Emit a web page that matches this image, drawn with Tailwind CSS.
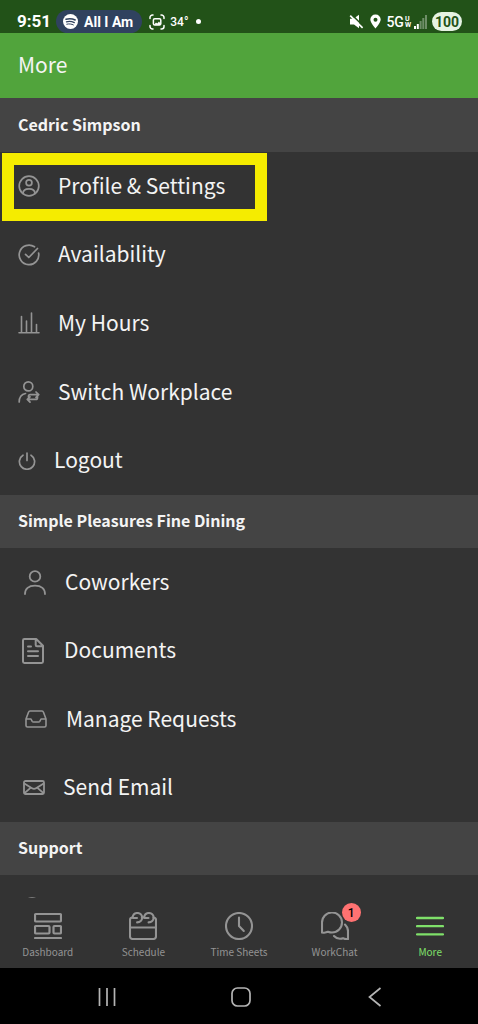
<!DOCTYPE html>
<html lang="en">
<head>
<meta charset="utf-8">
<meta name="viewport" content="width=device-width, initial-scale=1">
<title>More</title>
<script src="https://cdn.jsdelivr.net/npm/@tailwindcss/browser@4"></script>
</head>
<body class="flex h-screen flex-col overflow-hidden bg-[#333333] font-['Noto_Sans_CJK_SC','Noto_Sans',sans-serif] text-[#f4f4f4]">

<!-- System status bar -->
<div class="flex h-[33px] shrink-0 items-end justify-between bg-[#225218] pr-4 pl-[17px] font-[Roboto,sans-serif] text-white">
  <div class="flex h-[23px] items-center">
    <span class="text-[17px] leading-none font-bold">9:51</span>
    <div class="ml-[5px] flex h-[23px] items-center gap-1.5 rounded-full bg-[#30425f] pr-[9px] pl-[7px]">
      <svg class="size-[15px]" viewBox="0 0 15 15" aria-hidden="true"><circle cx="7.500" cy="7.500" r="7.500" fill="#fff"/><g fill="none" stroke="#30425f" stroke-linecap="round"><path d="M3 5.200C6 4.300 9.500 4.600 12.200 6" stroke-width="1.500"/><path d="M3.400 7.800C6 7.100 9 7.400 11.300 8.600" stroke-width="1.200"/><path d="M3.800 10.200C6 9.600 8.500 9.900 10.400 10.900" stroke-width="1"/></g></svg>
      <span class="text-[14px] leading-none font-bold">All I Am</span>
    </div>
    <svg class="ml-[7px] size-4" viewBox="0 0 16 16" fill="none" stroke="#fff" stroke-width="1.500" stroke-linecap="round" aria-hidden="true"><path d="M1 4.500V3.500A2.500 2.500 0 0 1 3.500 1H4M12 1h.5A2.500 2.500 0 0 1 15 3.500v1M15 11.500v1A2.500 2.500 0 0 1 12.500 15H12M4 15h-.5A2.500 2.500 0 0 1 1 12.500v-1"/><rect x="4.400" y="4.700" width="7.400" height="6.400" rx="1.400"/><path d="M5 10.800 7 8.600l1.200 1 1.800-2 1.800 2.400v1z" fill="#fff" stroke="none"/></svg>
    <span class="ml-[5px] text-[12px] leading-none font-medium">34°</span>
    <span class="ml-[8px] size-[5px] rounded-full bg-white"></span>
  </div>
  <div class="flex h-[23px] items-center">
    <svg class="h-[15px] w-[15px]" viewBox="0 0 15 15" aria-hidden="true"><path d="M1 4.800h3.500L10 .8v13.400L5 10.500H1z" fill="#fff"/><path d="M2.600.6 15 12.800" stroke="#225218" stroke-width="1.600"/><path d="M1.200 1.600 13.600 13.800" stroke="#fff" stroke-width="1.700"/></svg>
    <svg class="ml-[6px] h-[15px] w-[11px]" viewBox="0 0 11 15" aria-hidden="true"><path fill="#fff" fill-rule="evenodd" d="M5.500.5A5 5 0 0 0 .3 5.600C.3 9 5.500 14.500 5.500 14.500S10.700 9 10.700 5.600A5 5 0 0 0 5.500.5Zm0 3.200a2 2 0 1 1 0 4 2 2 0 0 1 0-4Z"/></svg>
    <span class="ml-[5px] text-[14px] leading-none font-medium">5G</span>
    <span class="ml-px flex flex-col text-[7px] leading-[6px] font-bold"><span>U</span><span>W</span></span>
    <svg class="ml-[3px] h-[14px] w-[13px]" viewBox="0 0 13 14" fill="#fff" aria-hidden="true"><path d="M0 11h2v3H0zM2.800 9h2v5h-2z"/><path d="M5.600 6h2v8h-2zM8.300 3h2v11h-2zM11 0h2v14h-2z" opacity=".35"/></svg>
    <span class="ml-[5px] flex h-[19px] w-[30px] items-center justify-center rounded-full bg-[#e6f3e3] text-[14px] leading-none font-bold text-[#225218]">100</span>
  </div>
</div>

<header class="flex h-[65px] shrink-0 items-center bg-[#51a43c] px-[18px] pb-1">
  <h1 class="text-[21px] leading-8">More</h1>
</header>

<main class="min-h-0 flex-1 overflow-hidden">
  <section>
    <h2 class="flex h-[54px] items-center bg-[#444444] px-[18px] pb-0.5 text-[16px] leading-6 font-bold">Cedric Simpson</h2>
    <ul class="relative grid h-[343px] grid-rows-5 text-[21px] leading-8">
      <li class="grid"><a href="#profile" class="flex items-center gap-[18px] pl-[18px]">
        <svg class="size-[22px]" viewBox="0 0 22 22" fill="none" stroke="#949494" stroke-width="1.700" aria-hidden="true"><circle cx="11" cy="11" r="9.800"/><circle cx="11" cy="7.700" r="2.900"/><path d="M5 18.500c0-3 2.200-4.700 6-4.700s6 1.700 6 4.700" stroke-linecap="round"/></svg>
        <span class="pb-[3px]">Profile &amp; Settings</span></a></li>
      <li class="grid"><a href="#availability" class="flex items-center gap-[18px] pl-[18px]">
        <svg class="size-[22px]" viewBox="0 0 22 22" fill="none" stroke="#949494" stroke-width="1.700" stroke-linecap="round" stroke-linejoin="round" aria-hidden="true"><path d="M16.500 2.800A9.800 9.800 0 1 0 20.600 9"/><path d="m7.500 10.300 3.300 3.200L19.500 4.500"/></svg>
        <span class="pb-[3px]">Availability</span></a></li>
      <li class="grid"><a href="#hours" class="flex items-center gap-[18px] pl-[18px]">
        <svg class="size-[22px]" viewBox="0 0 22 22" fill="none" stroke="#949494" stroke-width="1.600" stroke-linecap="round" aria-hidden="true"><path d="M1 20.700h20M3.500 20V4.500M8.500 20V9M13.500 20V1M18.500 20v-7.500"/></svg>
        <span class="pb-[3px]">My Hours</span></a></li>
      <li class="grid"><a href="#workplace" class="flex items-center gap-[18px] pl-[18px]">
        <svg class="size-[22px]" viewBox="0 0 22 22" fill="none" stroke="#949494" stroke-width="1.700" stroke-linecap="round" stroke-linejoin="round" aria-hidden="true"><circle cx="10.300" cy="5.400" r="4.500"/><path d="M1.200 21c0-4.300 2.300-7.700 6.300-8.500M10.500 16.200v-.8c0-1 .6-1.700 1.700-1.700h8.300M18 11l2.700 2.700L18 16.400M19.500 15.500v1.200c0 1-.6 1.700-1.700 1.700H9.500M12 15.800l-2.700 2.600L12 21.200"/></svg>
        <span class="pb-[3px]">Switch Workplace</span></a></li>
      <li class="grid"><a href="#logout" class="flex items-center gap-[18px] pl-[18px]">
        <svg class="size-[18px]" viewBox="0 0 18 18" fill="none" stroke="#949494" stroke-width="1.700" stroke-linecap="round" aria-hidden="true"><path d="M9 1v7.500M5 3.200a7.600 7.600 0 1 0 8 0"/></svg>
        <span class="pb-[3px]">Logout</span></a></li>
      <li class="pointer-events-none absolute top-px left-0.5 h-[68px] w-[265px] border-12 border-[#f5ec00]" aria-hidden="true"></li>
    </ul>
  </section>

  <section>
    <h2 class="flex h-[53px] items-center bg-[#444444] px-[18px] pb-[3px] text-[16px] leading-6 font-bold">Simple Pleasures Fine Dining</h2>
    <ul class="grid h-[274px] grid-rows-4 text-[21px] leading-8">
      <li class="grid"><a href="#coworkers" class="flex items-center gap-[19px] pl-6">
        <svg class="h-[25px] w-[22px]" viewBox="0 0 22 25" fill="none" stroke="#949494" stroke-width="1.800" stroke-linecap="round" aria-hidden="true"><circle cx="11" cy="6.400" r="5.300"/><path d="M1 24c0-5.200 3.500-8.300 10-8.300S21 18.800 21 24"/></svg>
        <span class="pb-[3px]">Coworkers</span></a></li>
      <li class="grid"><a href="#documents" class="flex items-center gap-5 pl-[22px]">
        <svg class="h-[26px] w-[22px]" viewBox="0 0 22 26" fill="none" stroke="#949494" stroke-width="2" stroke-linecap="round" stroke-linejoin="round" aria-hidden="true"><path d="M2.400 1h11.800L21 7.800v15.800c0 .9-.5 1.400-1.400 1.400H2.400C1.500 25 1 24.500 1 23.600V2.400C1 1.500 1.500 1 2.400 1ZM13.700 1.500V7c0 .8.500 1.300 1.300 1.300h5.500M6 8.500h3M6 13.300h10M6 18h10"/></svg>
        <span class="pb-[3px]">Documents</span></a></li>
      <li class="grid"><a href="#requests" class="flex items-center gap-[19px] pl-[25px]">
        <svg class="h-[18px] w-[22px]" viewBox="0 0 22 18" fill="none" stroke="#949494" stroke-width="1.600" stroke-linejoin="round" aria-hidden="true"><path d="M5 1h12c.8 0 1.200.4 1.400 1L21 9v6.500c0 1-.5 1.500-1.500 1.500h-17C1.500 17 1 16.500 1 15.500V9l2.600-7C3.800 1.400 4.200 1 5 1ZM1 9h5l1.200 2.300c.3.500.7.700 1.300.7h5c.6 0 1-.2 1.300-.7L16 9h5"/></svg>
        <span class="pb-[3px]">Manage Requests</span></a></li>
      <li class="grid"><a href="#email" class="flex items-center gap-[18px] pl-[23px]">
        <svg class="h-[15px] w-[22px]" viewBox="0 0 22 15" fill="none" stroke="#949494" stroke-width="1.800" stroke-linejoin="round" aria-hidden="true"><rect x="1" y="1" width="20" height="13" rx="1.500"/><path d="M1.300 3.500 9 8.300c1.300.8 2.700.8 4 0l7.700-4.800M1.500 13.200 7.800 7.600M20.500 13.200l-6.300-5.600"/></svg>
        <span class="pb-[3px]">Send Email</span></a></li>
    </ul>
  </section>

  <section>
    <h2 class="flex h-[53px] items-center bg-[#444444] px-[18px] pb-[3px] text-[16px] leading-6 font-bold">Support</h2>
    <a href="#help" aria-label="Help" class="flex h-[68px] items-center pl-5">
      <svg class="size-6" viewBox="0 0 24 24" fill="none" stroke="#949494" stroke-width="1.400" aria-hidden="true"><circle cx="12" cy="12" r="11"/></svg>
    </a>
  </section>
</main>

<!-- Tab bar -->
<nav class="grid h-[70px] shrink-0 grid-cols-5 bg-[#333333] text-[10px] leading-4 text-[#949494]">
  <a href="#dashboard" class="flex flex-col items-center gap-1 pt-[14px]">
    <svg class="size-7" viewBox="0 0 28 28" fill="none" stroke="#949494" stroke-width="2.200" stroke-linecap="round" aria-hidden="true"><rect x="1" y="2" width="26" height="7.500" rx="1"/><rect x="1" y="14" width="14.500" height="7.500" rx="1"/><rect x="19.500" y="14" width="7.500" height="7.500" rx="1"/><path d="M1 26h26"/></svg>
    Dashboard</a>
  <a href="#schedule" class="flex flex-col items-center gap-1 pt-[14px]">
    <svg class="size-7" viewBox="0 0 28 28" fill="none" stroke="#949494" stroke-width="2.100" stroke-linecap="round" stroke-linejoin="round" aria-hidden="true"><path d="M3.500 5.500C1.900 5.500 1 6.400 1 8v16.500C1 26.100 1.900 27 3.500 27h21c1.600 0 2.500-.9 2.500-2.500V8c0-1.600-.9-2.500-2.500-2.500M12.800 5.500h3M1 15.500h26"/><path d="M3.500 5.500C4 2.700 5.800 1 8.300 1c2.800 0 4.800 1.900 4.800 4.600s-2 4.800-5 4.800M15 5.500C15.500 2.700 17.300 1 19.800 1c2.800 0 4.800 1.900 4.800 4.600s-2 4.800-5 4.800M4 6h4M15.500 6h4"/></svg>
    Schedule</a>
  <a href="#timesheets" class="flex flex-col items-center gap-1 pt-[14px]">
    <svg class="size-7" viewBox="0 0 28 28" fill="none" stroke="#949494" stroke-width="2.100" stroke-linecap="round" stroke-linejoin="round" aria-hidden="true"><circle cx="14" cy="14" r="13"/><path d="M14 5.500V14l4.800 5"/></svg>
    Time Sheets</a>
  <a href="#workchat" class="flex flex-col items-center gap-1 pt-[14px]">
    <span class="relative">
      <svg class="size-7" viewBox="0 0 28 28" fill="none" stroke="#949494" stroke-width="2.100" stroke-linecap="round" stroke-linejoin="round" aria-hidden="true"><path d="M1 20.500V11A10 10 0 1 1 11 20.500c-1.500 0-2.700-.3-4-.8-1.600 1-3.500 1.200-6 .8Z"/><path d="M24 12.500c2 2 3 4 3 6.500v8c-2 .3-3.700.1-5-.8-1 .4-1.900.5-3 .5-2.400 0-4.400-.9-6-2.700"/></svg>
      <span class="absolute -top-[9px] left-[21px] flex size-[19px] items-center justify-center rounded-full bg-[#ff7272] font-[Roboto,sans-serif] text-[12px] leading-none font-medium text-black">1</span>
    </span>
    WorkChat</a>
  <a href="#more" aria-current="page" class="flex flex-col items-center gap-1 pt-[14px] text-[#7fe06a]">
    <svg class="size-7" viewBox="0 0 28 28" stroke="#7fe06a" stroke-width="2.300" stroke-linecap="round" aria-hidden="true"><path d="M1 6h26M1 14.200h26M1 22.400h26"/></svg>
    More</a>
</nav>

<!-- System navigation -->
<div class="flex h-[56px] shrink-0 items-center justify-around bg-black pt-px pr-9 pl-10">
  <button type="button" aria-label="Recent apps" class="p-2"><svg class="size-5" viewBox="0 0 20 20" stroke="#b4b4b4" stroke-width="1.700" aria-hidden="true"><path d="M2.500 1v18M10 1v18M17.500 1v18"/></svg></button>
  <button type="button" aria-label="Home" class="p-2"><svg class="size-5" viewBox="0 0 20 20" fill="none" stroke="#b4b4b4" stroke-width="1.700" aria-hidden="true"><rect x="1" y="1" width="18" height="18" rx="5.500"/></svg></button>
  <button type="button" aria-label="Back" class="p-2"><svg class="size-5" viewBox="0 0 20 20" fill="none" stroke="#b4b4b4" stroke-width="1.700" aria-hidden="true"><path d="M15.500 1 4.500 10l11 9"/></svg></button>
</div>
</body>
</html>
